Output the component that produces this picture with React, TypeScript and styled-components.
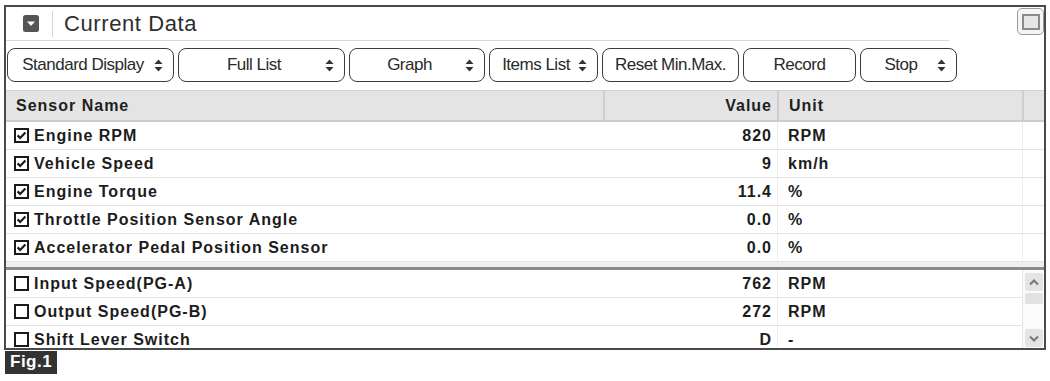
import styled, { createGlobalStyle } from "styled-components";

const GlobalStyle = createGlobalStyle`
  body {
    margin: 0;
    background: #ffffff;
    font-family: "Liberation Sans", Arial, sans-serif;
  }
`;

const Page = styled.div`
  width: 1050px;
  height: 381px;
  padding: 5px 0 0 4px;
  box-sizing: border-box;
  overflow: hidden;
`;

const Panel = styled.div`
  width: 1042px;
  box-sizing: border-box;
  border: 2px solid #4a4a4a;
  background: #ffffff;
  display: flex;
  flex-direction: column;
`;

const TitleBar = styled.div`
  height: 34px;
  display: flex;
  align-items: flex-start;
`;

const TitleMain = styled.div`
  flex: 1;
  height: 33px;
  display: flex;
  align-items: center;
  padding-left: 17px;
  border-bottom: 1px solid #d8d8d8;
  margin-right: 68px;
`;

const TitleIcon = styled.svg`
  width: 16px;
  height: 17px;
  flex-shrink: 0;
`;

const TitleDivider = styled.div`
  width: 1px;
  height: 26px;
  background: #d4d4d4;
  margin: 0 11px 0 13px;
`;

const TitleText = styled.span`
  font-size: 22px;
  letter-spacing: 0.6px;
  color: #2e2e2e;
  line-height: 1;
`;

const MaxButton = styled.div`
  width: 27px;
  height: 27px;
  margin-top: 1px;
  box-sizing: border-box;
  border: 1.5px solid #9a9a9a;
  border-radius: 5px;
  background: #f5f5f5;
  display: flex;
  align-items: center;
  justify-content: center;
`;

const MaxInner = styled.div`
  width: 18px;
  height: 16px;
  box-sizing: border-box;
  border: 2px solid #8a8a8a;
  background: #e6e6e6;
`;

const Toolbar = styled.div`
  display: flex;
  gap: 4px;
  padding: 7px 0 8px 1px;
`;

const ToolButton = styled.div<{ $w: number; $arrow?: boolean }>`
  width: ${(p) => p.$w}px;
  height: 34px;
  box-sizing: border-box;
  border: 1.5px solid #3c3c3c;
  border-radius: 8px;
  background: #ffffff;
  display: flex;
  align-items: center;
  padding: 0 ${(p) => (p.$arrow ? 10 : 4)}px 0 4px;
  font-size: 17px;
  letter-spacing: -0.5px;
  color: #2a2a2a;
`;

const ButtonLabel = styled.span`
  flex: 1;
  text-align: center;
  white-space: nowrap;
`;

const SortArrows = styled.svg`
  width: 9px;
  height: 13px;
  flex-shrink: 0;
`;

const Grid = styled.div<{ $scroll?: boolean }>`
  display: grid;
  grid-template-columns: 597px 174px 245px ${(p) => (p.$scroll ? "" : "1fr")};
`;

const HeaderRow = styled(Grid)`
  height: 32px;
  box-sizing: border-box;
  background: #e4e4e4;
  border-top: 1px solid #d2d2d2;
  border-bottom: 2px solid #cdcdcd;
  font-weight: bold;
  font-size: 16px;
  letter-spacing: 1px;
  color: #1e1e1e;
`;

const HeadCell = styled.div<{ $align?: "left" | "right"; $sep?: boolean }>`
  display: flex;
  align-items: center;
  justify-content: ${(p) => (p.$align === "right" ? "flex-end" : "flex-start")};
  padding: ${(p) => (p.$align === "right" ? "0 5px 0 0" : "0 0 0 10px")};
  border-left: ${(p) => (p.$sep ? "2px solid #cfcfcf" : "none")};
`;

const DataRow = styled(Grid)`
  height: 28px;
  box-sizing: border-box;
  border-bottom: 1px solid #e3e3e3;
  font-weight: bold;
  font-size: 16px;
  letter-spacing: 1px;
  color: #1c1c1c;
`;

const NameCell = styled.div`
  display: flex;
  align-items: center;
  padding-left: 8px;
  white-space: nowrap;
`;

const ValueCell = styled.div`
  display: flex;
  align-items: center;
  justify-content: flex-end;
  padding-right: 5px;
`;

const UnitCell = styled.div`
  display: flex;
  align-items: center;
  padding-left: 10px;
  border-left: 1px solid #ededed;
`;

const EmptyCell = styled.div`
  border-left: 1px solid #ededed;
`;

const CheckBox = styled.svg`
  width: 15px;
  height: 15px;
  margin-right: 5px;
  flex-shrink: 0;
`;

const Divider = styled.div`
  height: 8px;
  box-sizing: border-box;
  background: #efefef;
  border-bottom: 3px solid #8a8a8a;
`;

const LowerSection = styled.div`
  height: 78px;
  display: flex;
  overflow: hidden;
`;

const LowerRows = styled.div`
  width: 1016px;
`;

const ScrollBar = styled.div`
  flex: 1;
  border-left: 1px solid #e6e6e6;
  background: #fbfbfb;
  display: flex;
  flex-direction: column;
  align-items: center;
  padding: 3px 0 1px;
`;

const ScrollButton = styled.div`
  width: 18px;
  height: 18px;
  border-radius: 2px;
  background: #e4e4e4;
  display: flex;
  align-items: center;
  justify-content: center;
`;

const ScrollThumb = styled.div`
  width: 18px;
  height: 11px;
  margin-top: 2px;
  border-radius: 2px;
  background: #e2e2e2;
`;

const ScrollSpacer = styled.div`
  flex: 1;
`;

const FigLabel = styled.div`
  display: inline-block;
  margin: 1px 0 0 1px;
  padding: 1px 5px 2px;
  background: #333333;
  color: #ffffff;
  font-weight: bold;
  font-size: 17px;
  letter-spacing: 0.5px;
`;

interface Sensor {
  name: string;
  value: string;
  unit: string;
  checked: boolean;
}

const pinned: Sensor[] = [
  { name: "Engine RPM", value: "820", unit: "RPM", checked: true },
  { name: "Vehicle Speed", value: "9", unit: "km/h", checked: true },
  { name: "Engine Torque", value: "11.4", unit: "%", checked: true },
  { name: "Throttle Position Sensor Angle", value: "0.0", unit: "%", checked: true },
  { name: "Accelerator Pedal Position Sensor", value: "0.0", unit: "%", checked: true },
];

const others: Sensor[] = [
  { name: "Input Speed(PG-A)", value: "762", unit: "RPM", checked: false },
  { name: "Output Speed(PG-B)", value: "272", unit: "RPM", checked: false },
  { name: "Shift Lever Switch", value: "D", unit: "-", checked: false },
];

const buttons = [
  { label: "Standard Display", w: 167, arrow: true },
  { label: "Full List", w: 167, arrow: true },
  { label: "Graph", w: 136, arrow: true },
  { label: "Items List", w: 109, arrow: true },
  { label: "Reset Min.Max.", w: 137, arrow: false },
  { label: "Record", w: 113, arrow: false },
  { label: "Stop", w: 97, arrow: true },
];

function Check({ checked }: { checked: boolean }) {
  return (
    <CheckBox viewBox="0 0 15 15">
      <rect x="1" y="1" width="13" height="13" fill="#fff" stroke="#1a1a1a" strokeWidth="2" />
      {checked && (
        <path d="M3.6 7.4 L6.2 10 L11.4 4.6" fill="none" stroke="#1a1a1a" strokeWidth="2.2" />
      )}
    </CheckBox>
  );
}

function Arrows() {
  return (
    <SortArrows viewBox="0 0 9 13">
      <path d="M4.5 0.5 L8.5 5 L0.5 5 Z" fill="#333" />
      <path d="M4.5 12.5 L8.5 8 L0.5 8 Z" fill="#333" />
    </SortArrows>
  );
}

function SensorRow({ s, scroll }: { s: Sensor; scroll?: boolean }) {
  return (
    <DataRow $scroll={scroll}>
      <NameCell>
        <Check checked={s.checked} />
        {s.name}
      </NameCell>
      <ValueCell>{s.value}</ValueCell>
      <UnitCell>{s.unit}</UnitCell>
      {!scroll && <EmptyCell />}
    </DataRow>
  );
}

export default function App() {
  return (
    <>
      <GlobalStyle />
      <Page>
        <Panel>
          <TitleBar>
            <TitleMain>
              <TitleIcon viewBox="0 0 16 17">
                <rect x="0" y="0" width="16" height="17" rx="2.5" fill="#555" />
                <path d="M4 6.5 L12 6.5 L8 11 Z" fill="#fff" />
              </TitleIcon>
              <TitleDivider />
              <TitleText>Current Data</TitleText>
            </TitleMain>
            <MaxButton>
              <MaxInner />
            </MaxButton>
          </TitleBar>

          <Toolbar>
            {buttons.map((b) => (
              <ToolButton key={b.label} $w={b.w} $arrow={b.arrow}>
                <ButtonLabel>{b.label}</ButtonLabel>
                {b.arrow && <Arrows />}
              </ToolButton>
            ))}
          </Toolbar>

          <HeaderRow>
            <HeadCell>Sensor Name</HeadCell>
            <HeadCell $align="right" $sep>
              Value
            </HeadCell>
            <HeadCell $sep>Unit</HeadCell>
            <HeadCell $sep />
          </HeaderRow>

          {pinned.map((s) => (
            <SensorRow key={s.name} s={s} />
          ))}

          <Divider />

          <LowerSection>
            <LowerRows>
              {others.map((s) => (
                <SensorRow key={s.name} s={s} scroll />
              ))}
            </LowerRows>
            <ScrollBar>
              <ScrollButton>
                <svg width="10" height="7" viewBox="0 0 10 7">
                  <path d="M1 5.5 L5 1.5 L9 5.5" fill="none" stroke="#777" strokeWidth="2" />
                </svg>
              </ScrollButton>
              <ScrollThumb />
              <ScrollSpacer />
              <ScrollButton>
                <svg width="10" height="7" viewBox="0 0 10 7">
                  <path d="M1 1.5 L5 5.5 L9 1.5" fill="none" stroke="#777" strokeWidth="2" />
                </svg>
              </ScrollButton>
            </ScrollBar>
          </LowerSection>
        </Panel>
        <FigLabel>Fig.1</FigLabel>
      </Page>
    </>
  );
}
